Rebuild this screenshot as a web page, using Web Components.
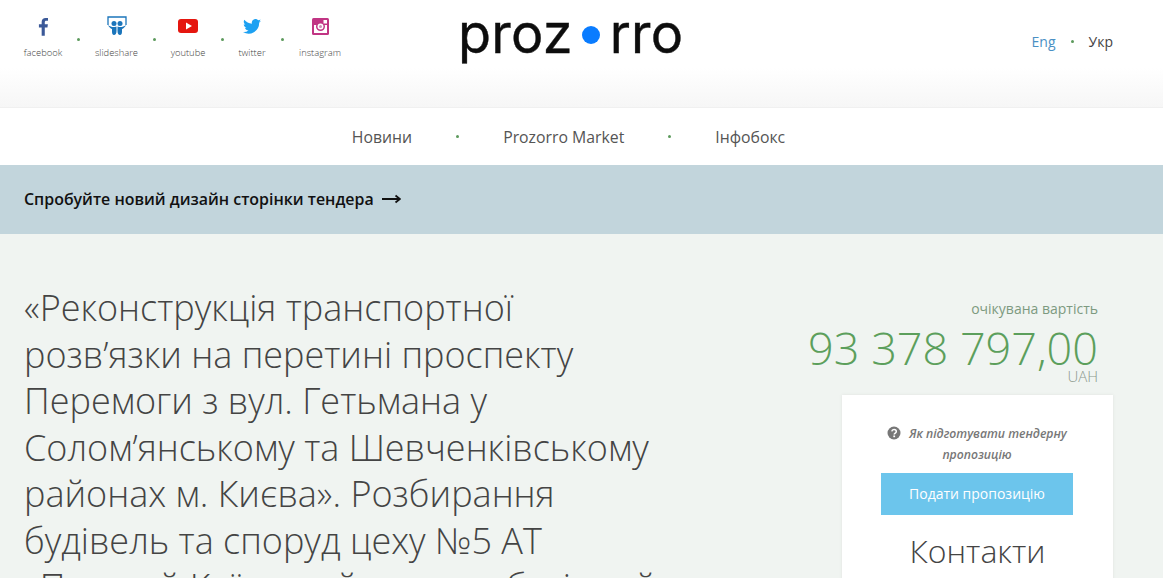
<!DOCTYPE html>
<html><head><meta charset="utf-8">
<style>
html,body{margin:0;padding:0;height:578px;overflow:hidden;background:#f0f4f1;font-family:"Open Sans",sans-serif;}
</style></head><body>
<pz-header></pz-header>
<pz-nav></pz-nav>
<pz-banner></pz-banner>
<pz-tender></pz-tender>
<script>
function def(name,html){customElements.define(name,class extends HTMLElement{constructor(){super();this.attachShadow({mode:'open'}).innerHTML=html;}});}
def('pz-social',`<style>
:host{display:flex;flex-direction:column;align-items:center;width:var(--w,40px);font:300 9.400px/12px "Open Sans",sans-serif;color:#444}
.i{height:26px;width:26px;margin-top:13px;display:flex;align-items:center;justify-content:center}
span{margin-top:8px;white-space:nowrap}
</style><div class="i"><slot name="i"></slot></div><span><slot></slot></span>`);
def('pz-dot',`<style>:host{display:block;width:3px;height:3px;border-radius:50%;background:#5c9a5c;flex:none}</style>`);
def('pz-header',`<style>
:host{display:block;height:108px;box-sizing:border-box;background:linear-gradient(#fff 0,#fff 68px,#f6f6f6 108px);position:relative;border-bottom:1px solid #f0f0f0}
.row{display:flex;height:100%;justify-content:space-between;padding:0 50px 0 24px}
.soc{display:flex;align-items:flex-start;height:70px}
.soc pz-dot{margin-top:38px}
.logo{position:absolute;left:458px;top:3px;display:flex;align-items:center;font:400 54px/62px Inter,sans-serif;letter-spacing:.2px;color:#0d0d0d;-webkit-text-stroke:.4px #0d0d0d}
.logo i{display:block;width:18px;height:18px;border-radius:50%;background:#0a7cff;margin:2px 10px 0 9px}
.lang{display:flex;align-items:center;gap:15px;height:82px;font:400 14px "Open Sans",sans-serif;color:#444}
.lang a{color:#4a90c4}
</style><div class="row"><div class="soc">
<pz-social style="--w:38px"><svg slot="i" width="11" height="19" viewBox="0 0 12 20"><path fill="#3b5998" d="M4 20V11H1V7.500h3V5C4 2 5.700.6 8.300.6c1.200 0 2.200.1 2.600.1v3.100H9.100C7.700 3.800 7.400 4.500 7.400 5.500v2h3.400l-.5 3.500H7.400v9z"/></svg>facebook</pz-social>
<pz-dot style="margin-left:15px"></pz-dot>
<pz-social style="--w:44px;margin-left:14.500px"><svg slot="i" width="20" height="20" viewBox="0 0 20 20"><path fill="none" stroke="#1b75bb" stroke-width="1.300" d="M1 9V1h18v8"/><circle cx="7" cy="7.500" r="2.500" fill="#1b75bb"/><circle cx="13" cy="7.500" r="2.500" fill="#1b75bb"/><path fill="#1b75bb" d="M1 9c2 1.500 4 2 5 2 1 0 2.500 0 3.500-.5V15c0 2.500-1 4-2.500 4S5 17.500 5 15.500V13C3.500 12.500 2 11 1 9zM19 9c-2 1.500-4 2-5 2-1 0-2.500 0-3.500-.5V15c0 2.500 1 4 2.500 4s2-1.500 2-3.500V13c1.500-.5 3-2 4-4z"/></svg>slideshare</pz-social>
<pz-dot style="margin-left:14.500px;"></pz-dot>
<pz-social style="--w:36px;margin-left:14px"><svg slot="i" width="20" height="14" viewBox="0 0 20 14"><rect width="20" height="14" rx="3" fill="#e5160f"/><path fill="#fff" d="M8 3.500v7l6-3.500z"/></svg>youtube</pz-social>
<pz-dot style="margin-left:15px"></pz-dot>
<pz-social style="--w:28px;margin-left:14px"><svg slot="i" width="18" height="15" viewBox="0 0 24 20"><path fill="#1da1f2" d="M24 2.400c-.9.400-1.800.700-2.800.800 1-.6 1.800-1.600 2.200-2.700-1 .6-2 1-3.100 1.200A4.900 4.900 0 0 0 11.900 6.200C7.800 6 4.200 4 1.700.9c-1.300 2.200-.7 5.100 1.500 6.600-.8 0-1.600-.2-2.200-.6 0 2.400 1.700 4.400 3.900 4.900-.7.200-1.500.2-2.200.1.600 2 2.400 3.400 4.600 3.400A9.900 9.900 0 0 1 0 17.300 14 14 0 0 0 21.500 4.900c1-.7 1.800-1.500 2.500-2.500z"/></svg>twitter</pz-social>
<pz-dot style="margin-left:15px"></pz-dot>
<pz-social style="--w:42px;margin-left:15px"><svg slot="i" width="17" height="17" viewBox="0 0 17 17"><rect width="17" height="17" rx="1.500" fill="#c13584"/><rect x="2" y="7" width="13" height="8" fill="#fff"/><circle cx="8.500" cy="8.500" r="4.500" fill="#c13584"/><circle cx="8.500" cy="8.500" r="3" fill="#fff"/><circle cx="8.500" cy="8.500" r="1.500" fill="#c98fb5"/><rect x="11.500" y="2" width="3.500" height="3.500" fill="#fff"/></svg>instagram</pz-social>
</div>
<div class="lang"><a>Eng</a><pz-dot></pz-dot><span>Укр</span></div></div>
<div class="logo">proz<i></i>rro</div>`);
def('pz-nav',`<style>
:host{display:flex;justify-content:center;align-items:center;gap:44px;height:57px;background:#fff;font:400 15.800px "Open Sans",sans-serif;color:#555;box-sizing:border-box;padding-right:26px}
</style><span>Новини</span><pz-dot></pz-dot><span>Prozorro Market</span><pz-dot></pz-dot><span>Інфобокс</span>`);
def('pz-banner',`<style>
:host{display:flex;align-items:center;gap:8px;height:69px;background:#c2d5dc;padding:0 0 2px 24px;box-sizing:border-box;font:600 15.950px "Open Sans",sans-serif;color:#111}
</style><span>Спробуйте новий дизайн сторінки тендера</span><svg width="19" height="10" viewBox="0 0 19 10"><path d="M0 5h17M13.500 1.500 18 5l-4.500 3.500" fill="none" stroke="#111" stroke-width="1.800"/></svg>`);
def('pz-tender',`<style>
:host{display:flex;justify-content:space-between;padding:51px 50px 0 24px;font-family:"Open Sans",sans-serif}
h1{margin:0;width:650px;font:300 36px/46.500px "Open Sans",sans-serif;color:#444}
aside{width:320px;display:flex;flex-direction:column;align-items:flex-end;padding-top:14px}
.v{text-align:right;padding-right:15px;white-space:nowrap}
.v .a{font-size:14px;line-height:20px;color:#7d9a80}
.v .b{font-size:45px;line-height:42px;font-weight:300;color:#5c9f5c;margin-top:8px}
.v .c{font-size:15px;line-height:14px;font-weight:300;color:#8a988c}
.card{width:271px;background:#fff;box-shadow:0 0 3px #e0e3e0;height:300px;margin-top:12px;text-align:center;padding-top:28px;box-sizing:border-box}
.h{font:italic 600 12.200px/21px "Open Sans",sans-serif;color:#777;width:192px;margin:0 auto 0 39px}
.btn{width:192px;height:42px;margin:8px 0 0 39px;background:#6cc5ec;color:#fff;font:400 14px/42px "Open Sans",sans-serif}
h2{margin:14px 0 0;font:300 32px/44px "Open Sans",sans-serif;color:#444}
svg{vertical-align:-2px;margin-right:8px}
</style><h1>«Реконструкція транспортної розв’язки на перетині проспекту Перемоги з вул. Гетьмана у Солом’янському та Шевченківському районах м. Києва». Розбирання будівель та споруд цеху №5 АТ «Перший Київський машинобудівний завод»</h1>
<aside><div class="v"><div class="a">очікувана вартість</div><div class="b">93 378 797,00</div><div class="c">UAH</div></div>
<div class="card"><div class="h"><svg width="14" height="14" viewBox="0 0 14 14"><circle cx="7" cy="7" r="6.500" fill="#777"/><path d="M4.800 5.400C5 4 6 3.500 7 3.500c1.300 0 2.300.8 2.300 2 0 1.600-2.100 1.500-2.100 3" fill="none" stroke="#fff" stroke-width="1.500"/><rect x="6.300" y="9.500" width="1.800" height="1.700" fill="#fff"/></svg>Як підготувати тендерну пропозицію</div>
<div class="btn">Подати пропозицію</div><h2>Контакти</h2></div></aside>`);
</script></body></html>
